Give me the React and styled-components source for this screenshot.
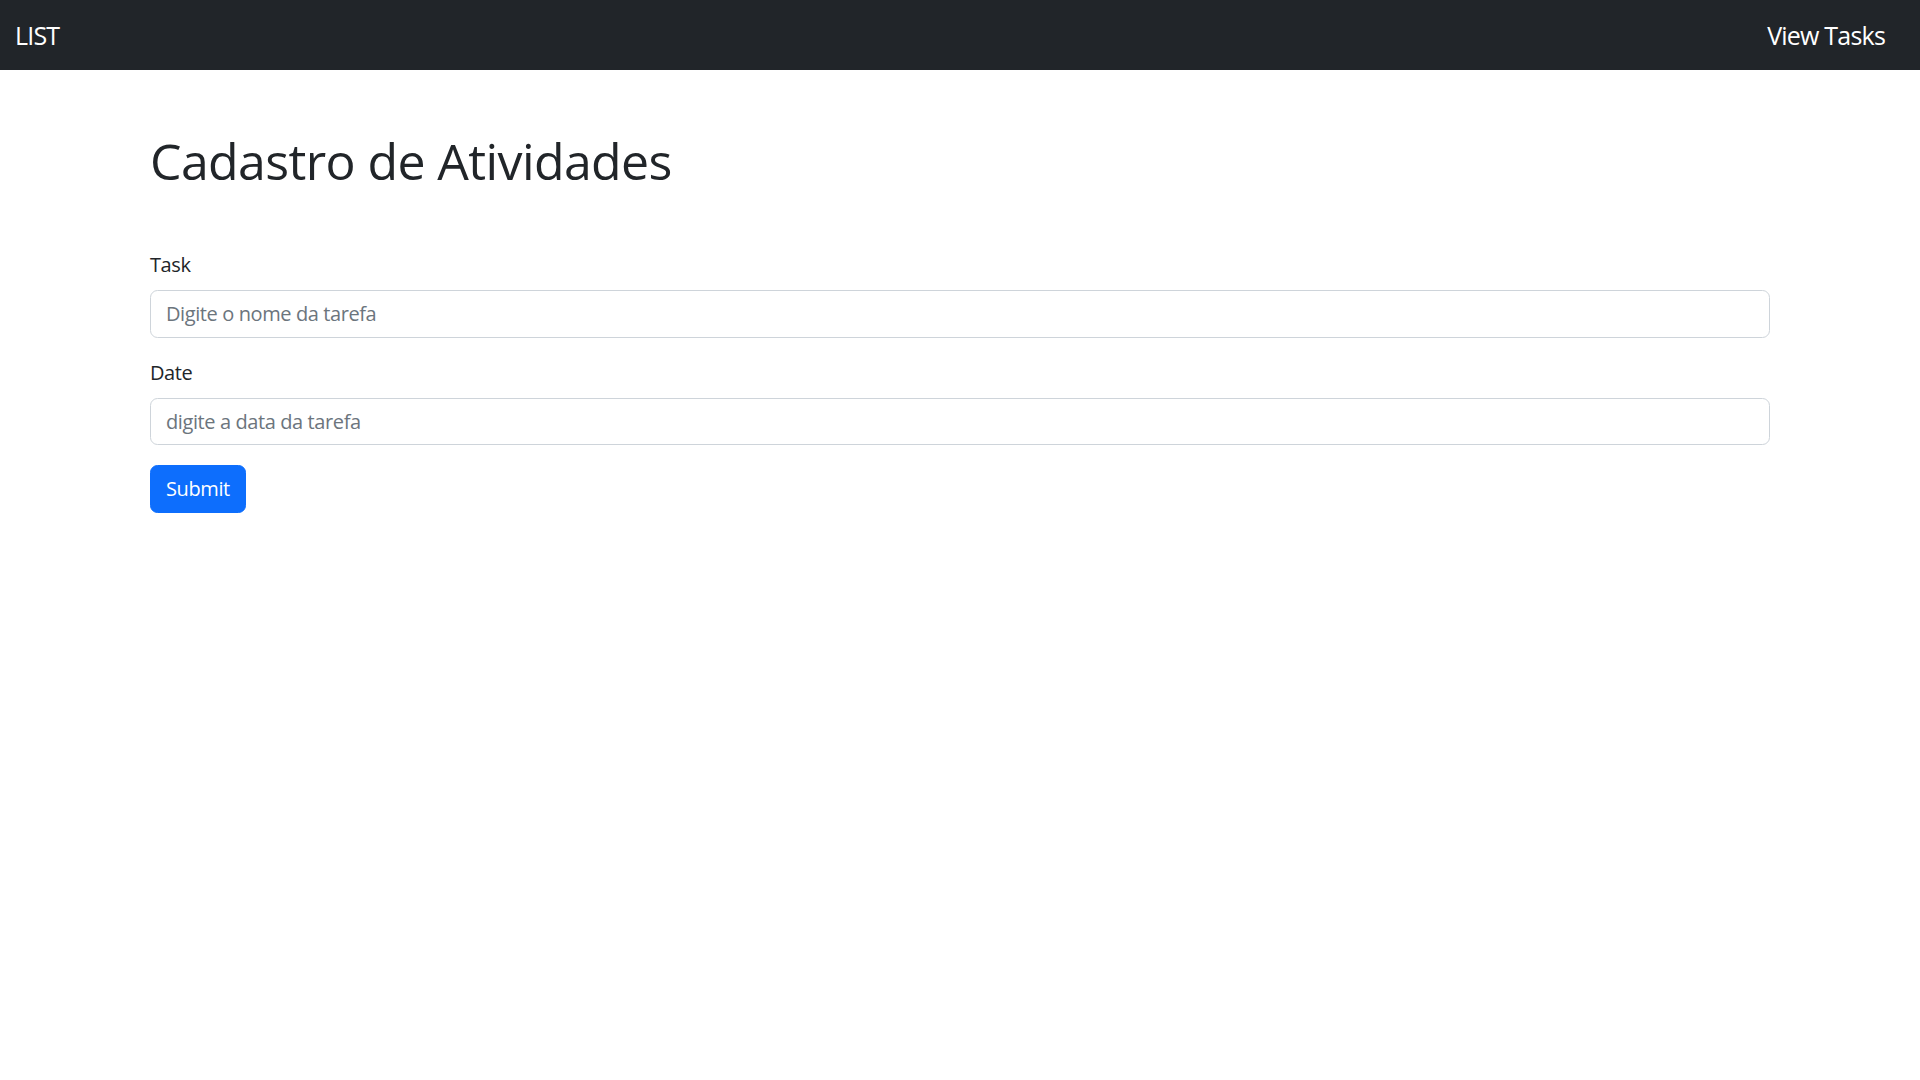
import styled, { createGlobalStyle } from 'styled-components'

const GlobalStyle = createGlobalStyle`
  * {
    box-sizing: border-box;
  }

  body {
    margin: 0;
    background: #fff;
    color: #212529;
    font-family: "Open Sans", "Noto Sans", sans-serif;
    font-size: 20px;
    line-height: 1.5;
    letter-spacing: -0.4px;
  }
`

function App() {
  return (
    <>
      <GlobalStyle />
      <Navbar>
        <Brand href="#">LIST</Brand>
        <Brand href="#" $right>View Tasks</Brand>
      </Navbar>
      <Container>
        <Title>Cadastro de Atividades</Title>
        <Form onSubmit={(e) => e.preventDefault()}>
          <Field>
            <Label htmlFor="task">Task</Label>
            <Input id="task" type="text" placeholder="Digite o nome da tarefa" />
          </Field>
          <Field>
            <Label htmlFor="date">Date</Label>
            <Input id="date" type="text" placeholder="digite a data da tarefa" />
          </Field>
          <Button type="submit">Submit</Button>
        </Form>
      </Container>
    </>
  )
}

const Navbar = styled.nav`
  background-color: #212529;
  display: flex;
  align-items: center;
  justify-content: space-between;
  padding: 10px 15px;
`

const Brand = styled.a`
  color: #fff;
  text-decoration: none;
  font-size: 25px;
  line-height: 37.5px;
  letter-spacing: -0.8px;
  padding: 7px 0 5.5px;
  margin-right: ${(props) => (props.$right ? '20px' : '0')};
`

const Container = styled.main`
  max-width: 1650px;
  margin: 0 auto;
  padding: 0 15px;
  margin-top: 61px;
`

const Title = styled.h1`
  font-size: 50px;
  font-weight: 500;
  line-height: 1.2;
  letter-spacing: -0.6px;
  margin: 0 0 10px;
`

const Form = styled.form`
  margin-top: 59px;
`

const Field = styled.div`
  margin-bottom: 20px;
`

const Label = styled.label`
  display: inline-block;
  margin-bottom: 10px;
`

const Input = styled.input`
  display: block;
  width: 100%;
  height: 47.5px;
  padding: 7.5px 15px;
  font: inherit;
  letter-spacing: inherit;
  color: #212529;
  background: #fff;
  border: 1px solid #ced4da;
  border-radius: 7.5px;
  outline: none;

  &::placeholder {
    color: #6c757d;
    opacity: 1;
  }
`

const Button = styled.button`
  display: inline-block;
  height: 47.5px;
  padding: 7.5px 15px;
  font: inherit;
  letter-spacing: inherit;
  color: #fff;
  background-color: #0d6efd;
  border: 1px solid #0d6efd;
  border-radius: 7.5px;
  cursor: pointer;
`

export default App
